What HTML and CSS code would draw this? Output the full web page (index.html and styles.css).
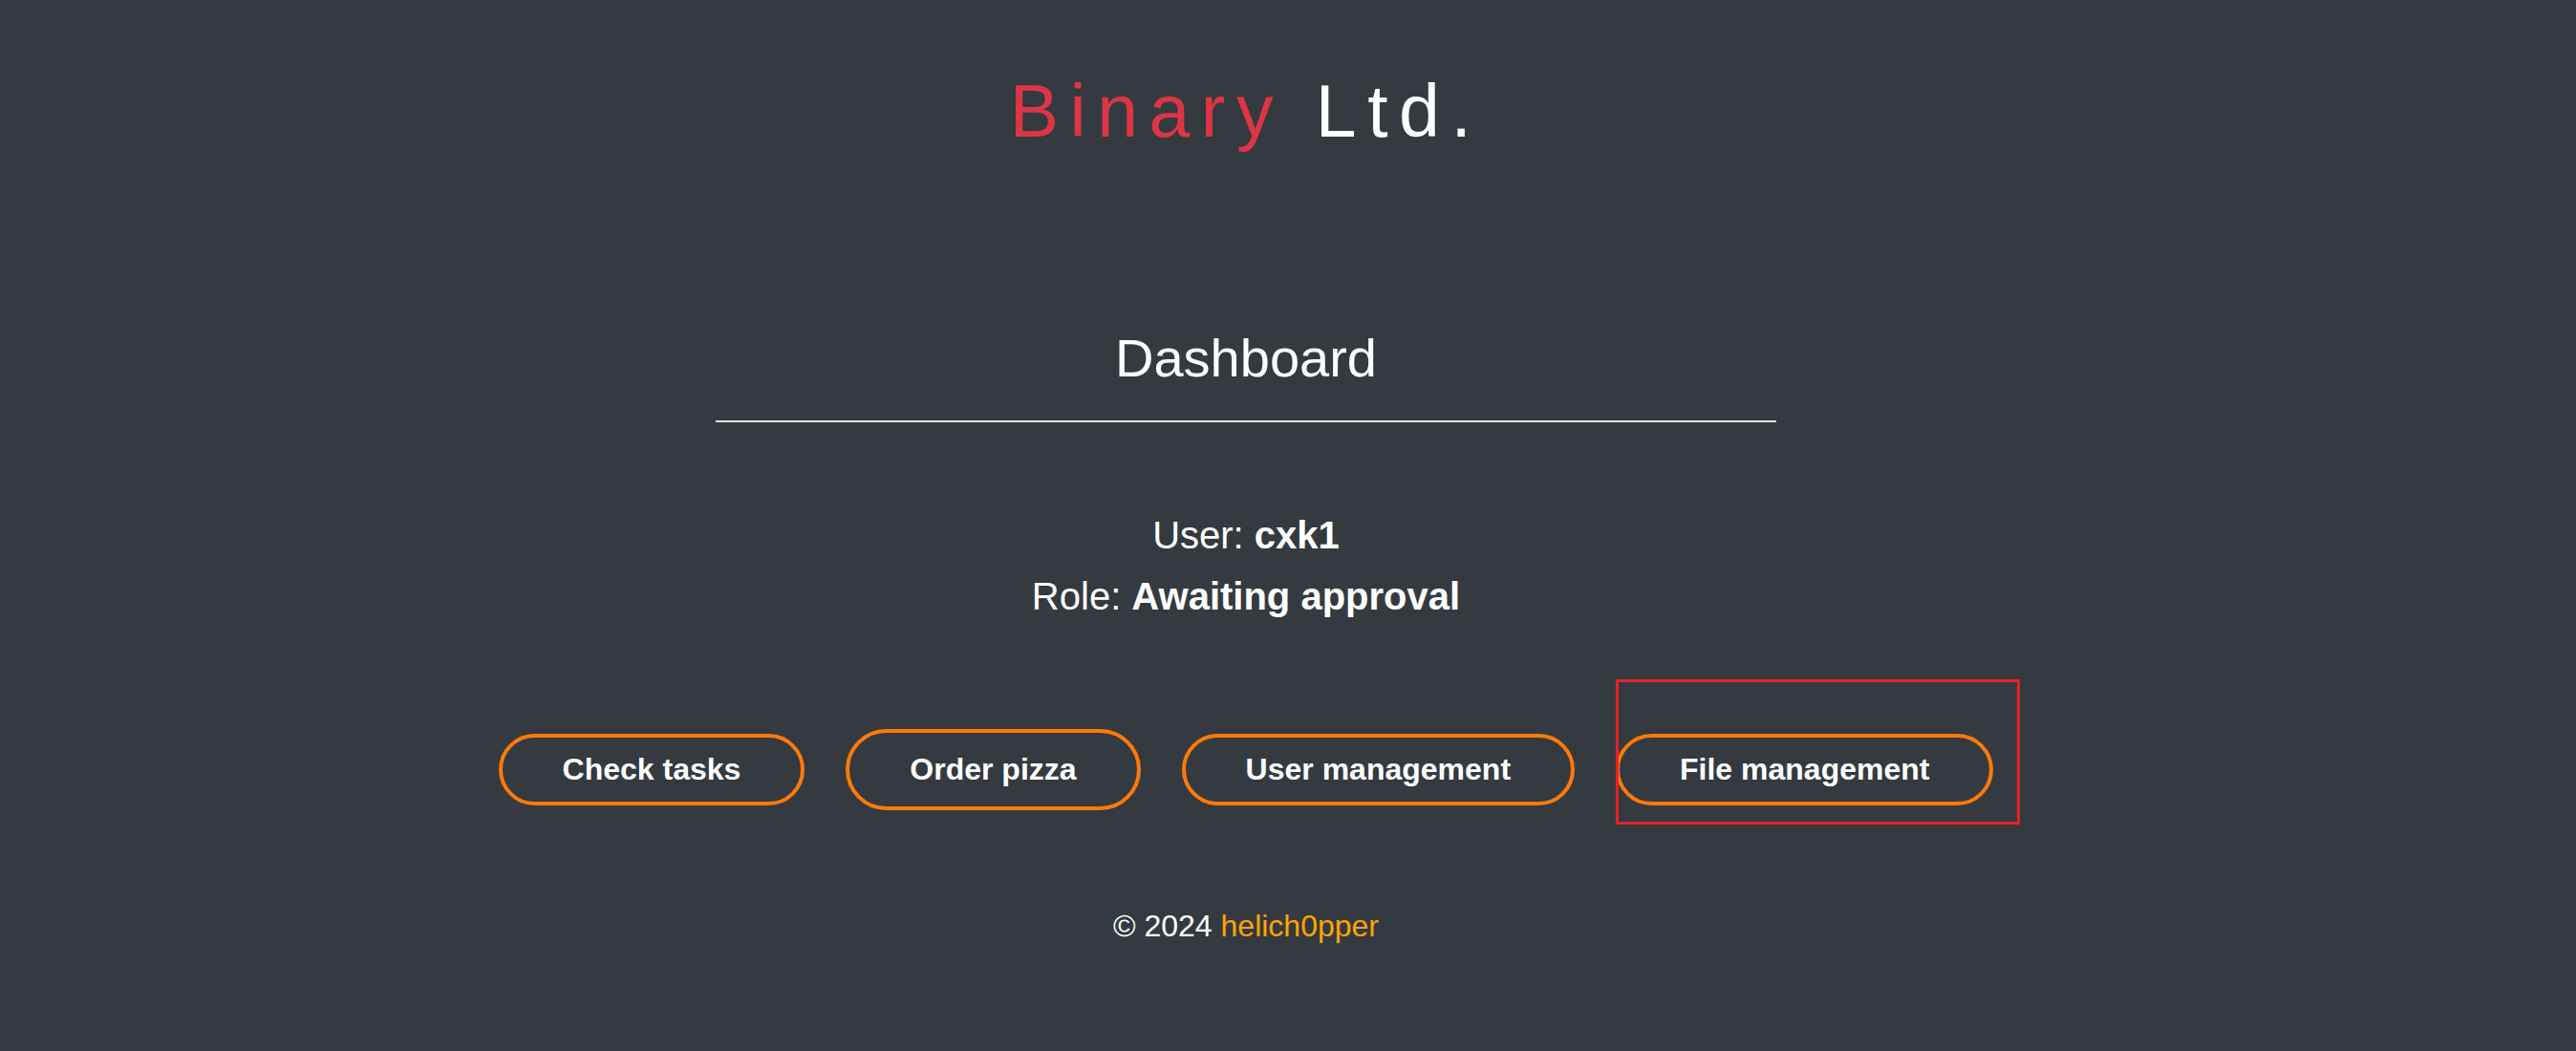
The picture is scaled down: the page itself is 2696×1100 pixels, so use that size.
FILE: index.html
```html
<!DOCTYPE html>
<html lang="en">
<head>
<meta charset="utf-8">
<title>Binary Ltd. - Dashboard</title>
<link rel="stylesheet" href="styles.css">
</head>
<body>
<div class="page">
  <header class="brand">
    <span class="brand-red">Binary</span> <span class="brand-white">Ltd.</span>
  </header>
  <main class="dash">
    <h1 class="title">Dashboard</h1>
    <hr class="rule">
    <div class="info">
      <p class="line">User: <b>cxk1</b></p>
      <p class="line">Role: <b>Awaiting approval</b></p>
    </div>
    <div class="actions">
      <a class="btn" href="#">Check tasks</a>
      <button class="btn btn-tall" type="button">Order pizza</button>
      <a class="btn" href="#">User management</a>
      <span class="marked">
        <a class="btn" href="#">File management</a>
        <span class="highlight"></span>
      </span>
    </div>
  </main>
  <footer class="foot">© 2024 <a class="author" href="#">helich0pper</a></footer>
</div>
</body>
</html>
```

FILE: styles.css
```css
html, body {
  margin: 0;
  padding: 0;
  background: #343a40;
}
body {
  font-family: "Liberation Sans", Arial, sans-serif;
  color: #ffffff;
  min-height: 1100px;
}
.page {
  box-sizing: border-box;
  width: 100%;
  padding: 70px 88px 0 0;
  display: flex;
  flex-direction: column;
  align-items: center;
}
.brand {
  font-size: 77px;
  line-height: 92px;
  letter-spacing: 11.5px;
  white-space: nowrap;
}
.brand-red { color: #dc3545; }
.brand-white { color: #ffffff; }
.dash {
  display: flex;
  flex-direction: column;
  align-items: center;
  width: 100%;
}
.title {
  margin: 179px 0 0;
  font-size: 56px;
  line-height: 67px;
  font-weight: normal;
}
.rule {
  margin: 32px 0 0;
  width: 1110px;
  height: 2px;
  border: 0;
  background: #dee2e6;
}
.info {
  margin-top: 86px;
  text-align: center;
}
.line {
  margin: 0;
  font-size: 40px;
  line-height: 64px;
}
.line b { font-weight: bold; }
.actions {
  margin-top: 107px;
  display: flex;
  align-items: center;
  justify-content: center;
  gap: 43px;
}
.btn {
  display: inline-block;
  box-sizing: border-box;
  font-family: "Liberation Sans", Arial, sans-serif;
  font-size: 32px;
  line-height: 37px;
  font-weight: bold;
  color: #ffffff;
  text-decoration: none;
  background: transparent;
  border: 4px solid #fd7a0a;
  border-radius: 999px;
  padding: 15px 63px;
  white-space: nowrap;
  margin: 0;
}
.btn-tall {
  padding-top: 20px;
  padding-bottom: 20px;
  cursor: pointer;
}
.marked {
  position: relative;
  display: inline-flex;
}
.highlight {
  position: absolute;
  left: 0;
  top: -57px;
  width: 423px;
  height: 152px;
  box-sizing: border-box;
  border: 3px solid #e8202a;
  pointer-events: none;
}
.foot {
  margin-top: 103px;
  font-size: 32px;
  line-height: 37px;
}
.author {
  color: #ffa500;
  text-decoration: none;
}
```
